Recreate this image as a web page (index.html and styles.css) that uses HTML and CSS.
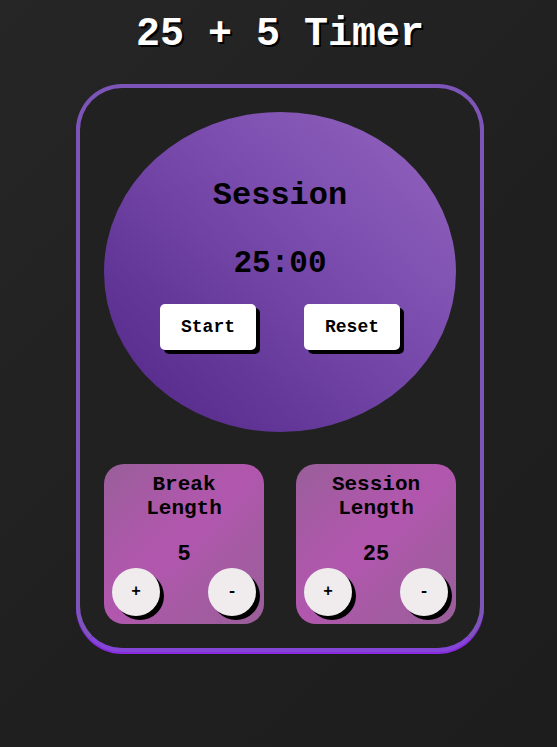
FILE: index.html
```html
<!DOCTYPE html>
<html lang="en">
<head>
<meta charset="utf-8">
<title>25 + 5 Timer</title>
<link rel="stylesheet" href="styles.css">
</head>
<body>
  <h1 class="title">25 + 5 Timer</h1>
  <div class="clock">
    <div class="face">
      <div class="label">Session</div>
      <div class="time">25:00</div>
      <div class="controls">
        <button class="btn">Start</button>
        <button class="btn">Reset</button>
      </div>
    </div>
    <div class="settings">
      <div class="card">
        <div class="card-title">Break<br>Length</div>
        <div class="card-value">5</div>
        <div class="card-btns">
          <button class="round">+</button>
          <button class="round">-</button>
        </div>
      </div>
      <div class="card">
        <div class="card-title">Session<br>Length</div>
        <div class="card-value">25</div>
        <div class="card-btns">
          <button class="round">+</button>
          <button class="round">-</button>
        </div>
      </div>
    </div>
  </div>
</body>
</html>
```

FILE: styles.css
```css
* { box-sizing: border-box; }
html, body { height: 100%; }
body {
  margin: 0;
  padding-left: 3px;
  background: linear-gradient(135deg, #262626 0%, #1f1f1f 60%, #1d1d1d 100%);
  font-family: "Liberation Mono", "Courier New", monospace;
  font-weight: bold;
  display: flex;
  flex-direction: column;
  align-items: center;
}
.title {
  margin: 11px 0 0;
  font-size: 40px;
  line-height: 48px;
  color: #fff;
  text-shadow: 2px 2px 0 #000;
}
.clock {
  margin-top: 25px;
  width: 408px;
  height: 568px;
  border: 4px solid #7d55b9;
  border-bottom-color: #8446d6;
  border-radius: 46px;
  box-shadow: 0 2px 0 #8a2be2;
  background: #212121;
  padding: 24px;
  display: flex;
  flex-direction: column;
  align-items: center;
  gap: 32px;
}
.face {
  width: 352px;
  height: 320px;
  flex: none;
  border-radius: 50%;
  background: linear-gradient(to bottom left, #9465be 0%, #7a4cae 40%, #5a2f8f 85%);
  display: flex;
  flex-direction: column;
  align-items: center;
  padding-top: 66px;
  color: #000;
}
.label {
  font-size: 32px;
  line-height: 36px;
}
.time {
  margin-top: 32px;
  font-size: 31px;
  line-height: 36px;
}
.controls {
  margin-top: 22px;
  display: flex;
  gap: 48px;
}
.btn {
  width: 96px;
  height: 46px;
  border: none;
  border-radius: 5px;
  background: #fff;
  color: #000;
  box-shadow: 4px 4px 0 #000;
  font-family: "Liberation Mono", "Courier New", monospace;
  font-weight: bold;
  font-size: 18px;
  padding: 0;
}
.settings {
  display: flex;
  gap: 32px;
}
.card {
  width: 160px;
  height: 160px;
  border-radius: 20px;
  background: linear-gradient(135deg, #995f99 0%, #ad58aa 35%, #b157ae 50%, #a85aa5 65%, #995f99 100%);
  display: flex;
  flex-direction: column;
  align-items: center;
  padding-top: 9px;
  color: #000;
}
.card-title {
  font-size: 21px;
  line-height: 24px;
  text-align: center;
}
.card-value {
  margin-top: 22px;
  font-size: 22px;
  line-height: 24px;
}
.card-btns {
  margin-top: 1px;
  width: 100%;
  padding: 0 8px;
  display: flex;
  justify-content: space-between;
}
.round {
  width: 48px;
  height: 48px;
  border-radius: 50%;
  border: none;
  background: #f0ecee;
  color: #000;
  box-shadow: 4px 4px 0 #000;
  font-family: "Liberation Mono", "Courier New", monospace;
  font-weight: bold;
  font-size: 16px;
  padding: 0;
}
```
